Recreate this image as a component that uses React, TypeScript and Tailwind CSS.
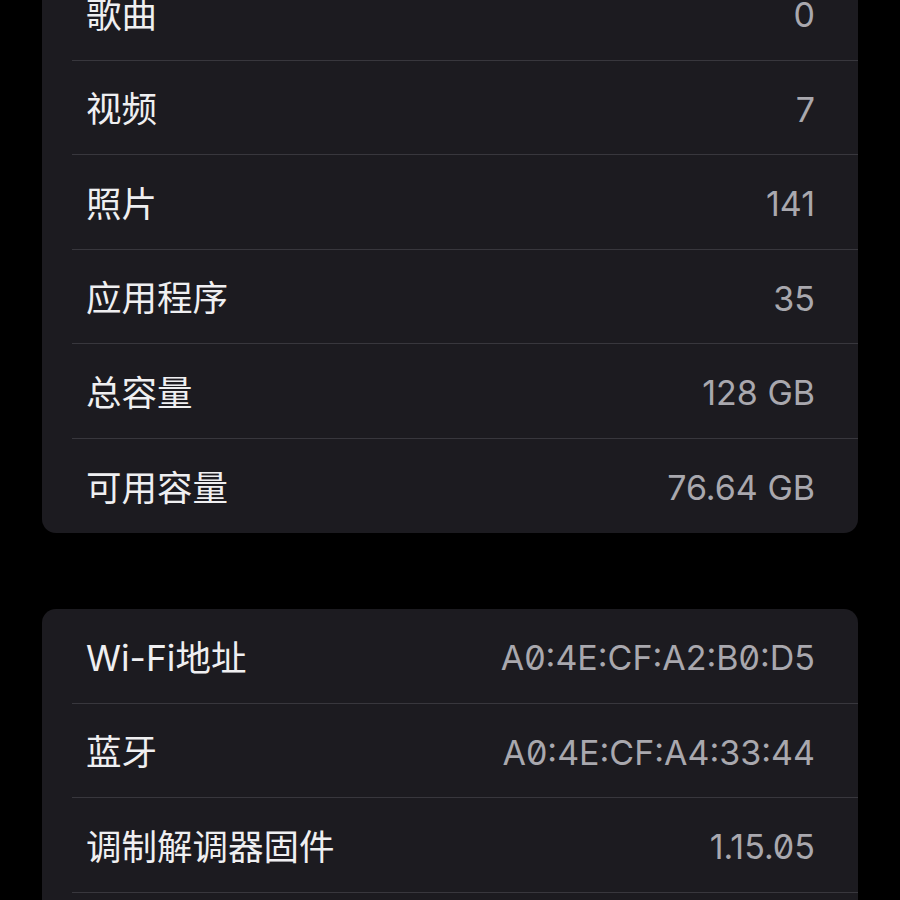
import React from 'react';

type Row = { label: string; value: string; slashed?: boolean };

const mediaRows: Row[] = [
  { label: '歌曲', value: '0' },
  { label: '视频', value: '7' },
  { label: '照片', value: '141' },
  { label: '应用程序', value: '35' },
  { label: '总容量', value: '128 GB' },
  { label: '可用容量', value: '76.64 GB' },
];

const networkRows: Row[] = [
  { label: 'Wi-Fi地址', value: 'A0:4E:CF:A2:B0:D5', slashed: true },
  { label: '蓝牙', value: 'A0:4E:CF:A4:33:44', slashed: true },
  { label: '调制解调器固件', value: '1.15.05', slashed: true },
];

function InfoRow({ row, last }: { row: Row; last: boolean }) {
  return (
    <div className="pl-[30px]">
      <div
        className={`flex h-[94.5px] items-center justify-between pl-[14px] pr-[43px] pt-[5px] ${
          last ? '' : 'border-b border-[#38373d]'
        }`}
      >
        <span className="text-[35.5px] leading-none text-[#efeff1]">{row.label}</span>
        <span
          className={`text-[34px] leading-none text-[#a9a8ae] ${row.slashed ? 'slashed-zero' : ''}`}
        >
          {row.value}
        </span>
      </div>
    </div>
  );
}

export default function App() {
  return (
    <div
      className="min-h-screen overflow-hidden bg-black px-[42px]"
      style={{ fontFamily: 'Inter, "Noto Sans CJK SC", sans-serif' }}
    >
      <div className="-mt-[34px] rounded-[14px] bg-[#1c1b20]">
        {mediaRows.map((row, i) => (
          <InfoRow key={row.label} row={row} last={i === mediaRows.length - 1} />
        ))}
      </div>

      <div className="mt-[76px] rounded-[14px] bg-[#1c1b20] pb-[60px]">
        {networkRows.map((row) => (
          <InfoRow key={row.label} row={row} last={false} />
        ))}
      </div>
    </div>
  );
}
